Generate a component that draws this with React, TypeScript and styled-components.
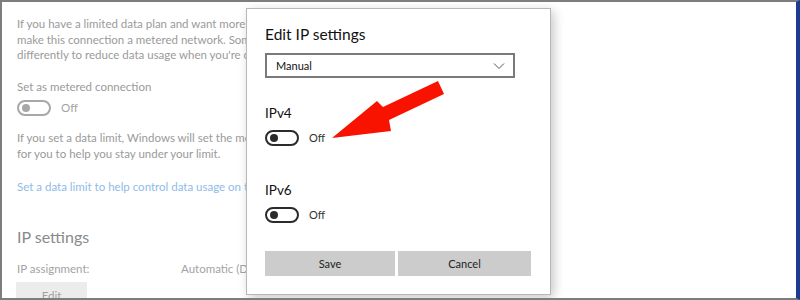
import React from 'react';
import styled, { createGlobalStyle } from 'styled-components';

const GlobalStyle = createGlobalStyle`
  html, body {
    margin: 0;
    padding: 0;
    background: #fff;
  }
  body {
    font-family: Lato, "Noto Sans", sans-serif;
  }
`;

const Frame = styled.div`
  position: relative;
  width: 800px;
  height: 300px;
  box-sizing: border-box;
  border: 2px solid #7d7d7d;
  border-right: 4px solid #1d3c8f;
  background: #fff;
  overflow: hidden;
`;

const Page = styled.div`
  display: flex;
  flex-direction: column;
  align-items: flex-start;
  padding: 14px 0 0 15px;
  color: #9a9a9a;
  font-size: 11.5px;
`;

const Para = styled.div<{ $top: number; $lh: number }>`
  margin-top: ${(p) => p.$top}px;
  line-height: ${(p) => p.$lh}px;
  white-space: nowrap;
`;

const Line = styled.div``;

const Link = styled(Para)`
  color: #8fbbe8;
`;

const SectionTitle = styled.div`
  margin-top: 30px;
  font-size: 16px;
  line-height: 24px;
  color: #8a8a8a;
`;

const AssignRow = styled.div`
  margin-top: 12px;
  display: grid;
  grid-template-columns: 164px auto;
  line-height: 16px;
  white-space: nowrap;
  color: #a3a3a3;
`;

const EditButton = styled.div`
  margin-top: 5px;
  margin-left: -1px;
  width: 71px;
  height: 26px;
  background: #ececec;
  color: #a0a0a0;
  display: flex;
  align-items: center;
  justify-content: center;
`;

const ToggleRow = styled.div<{ $top: number; $gap: number }>`
  margin-top: ${(p) => p.$top}px;
  display: flex;
  align-items: center;
  gap: ${(p) => p.$gap}px;
`;

const Switch = styled.div<{ $muted?: boolean }>`
  box-sizing: border-box;
  width: 34px;
  height: 16px;
  border-radius: 8px;
  border: 2px solid ${(p) => (p.$muted ? '#a8a8a8' : '#2b2b2b')};
  display: flex;
  align-items: center;
  padding-left: 3px;

  &::after {
    content: '';
    width: 8px;
    height: 8px;
    border-radius: 50%;
    background: ${(p) => (p.$muted ? '#a8a8a8' : '#2b2b2b')};
  }
`;

const SwitchText = styled.span<{ $muted?: boolean }>`
  font-size: ${(p) => (p.$muted ? 11.5 : 11)}px;
  color: ${(p) => (p.$muted ? '#a3a3a3' : '#333')};
  line-height: 16px;
`;

const Dialog = styled.div`
  position: absolute;
  left: 244px;
  top: 6px;
  width: 305px;
  height: 287px;
  box-sizing: border-box;
  background: #fff;
  border: 1px solid #b8b8b8;
  box-shadow: 3px 3px 10px rgba(0, 0, 0, 0.22);
  padding: 14px 0 0 18px;
  display: flex;
  flex-direction: column;
  color: #111;
`;

const DialogTitle = styled.div`
  font-size: 15.5px;
  line-height: 22px;
`;

const Select = styled.div`
  margin-top: 8px;
  width: 250px;
  height: 25px;
  box-sizing: border-box;
  border: 2px solid #7a7a7a;
  display: flex;
  align-items: center;
  justify-content: space-between;
  padding: 0 8px 0 9px;
  font-size: 11px;
`;

const Chevron = () => (
  <svg width="12" height="8" viewBox="0 0 12 8">
    <polyline points="1,1.5 6,6.5 11,1.5" fill="none" stroke="#555" strokeWidth="1" />
  </svg>
);

const FieldLabel = styled.div<{ $top: number }>`
  margin-top: ${(p) => p.$top}px;
  font-size: 13.5px;
  line-height: 20px;
`;

const ButtonRow = styled.div`
  margin-top: 28px;
  display: flex;
  gap: 3px;
`;

const DialogButton = styled.div<{ $w: number }>`
  width: ${(p) => p.$w}px;
  height: 25px;
  background: #cccccc;
  display: flex;
  align-items: center;
  justify-content: center;
  font-size: 11px;
  color: #222;
`;

const Arrow = styled.svg`
  position: absolute;
  left: 0;
  top: 0;
  pointer-events: none;
`;

export default function App() {
  return (
    <Frame>
      <GlobalStyle />
      <Page>
        <Para $top={0} $lh={15.5}>
          <Line>If you have a limited data plan and want more control over data usage,</Line>
          <Line>make this connection a metered network. Some apps might work</Line>
          <Line>differently to reduce data usage when you're connected to this network.</Line>
        </Para>
        <Para $top={16.5} $lh={16}>Set as metered connection</Para>
        <ToggleRow $top={5} $gap={10}>
          <Switch $muted />
          <SwitchText $muted>Off</SwitchText>
        </ToggleRow>
        <Para $top={13.5} $lh={16.5}>
          <Line>If you set a data limit, Windows will set the metered connection setting</Line>
          <Line>for you to help you stay under your limit.</Line>
        </Para>
        <Link $top={16.5} $lh={16}>Set a data limit to help control data usage on this network</Link>
        <SectionTitle>IP settings</SectionTitle>
        <AssignRow>
          <span>IP assignment:</span>
          <span>Automatic (DHCP)</span>
        </AssignRow>
        <EditButton>Edit</EditButton>
      </Page>

      <Dialog>
        <DialogTitle>Edit IP settings</DialogTitle>
        <Select>
          <span>Manual</span>
          <Chevron />
        </Select>
        <FieldLabel $top={25}>IPv4</FieldLabel>
        <ToggleRow $top={7} $gap={10}>
          <Switch />
          <SwitchText>Off</SwitchText>
        </ToggleRow>
        <FieldLabel $top={34}>IPv6</FieldLabel>
        <ToggleRow $top={7} $gap={10}>
          <Switch />
          <SwitchText>Off</SwitchText>
        </ToggleRow>
        <ButtonRow>
          <DialogButton $w={130}>Save</DialogButton>
          <DialogButton $w={133}>Cancel</DialogButton>
        </ButtonRow>
      </Dialog>

      <Arrow width="800" height="300" viewBox="0 0 800 300">
        <polygon
          points="330,136 375,99 381,105 436,79 442,92 387,118 389,129"
          fill="#f81300"
        />
      </Arrow>
    </Frame>
  );
}
